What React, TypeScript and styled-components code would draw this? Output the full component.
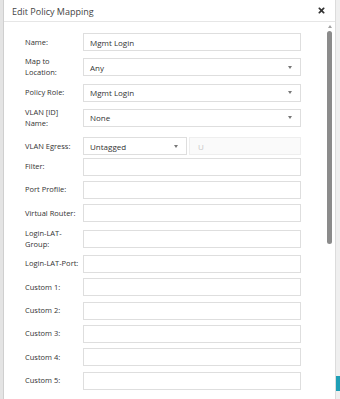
import React from "react"
import styled, { createGlobalStyle } from "styled-components"
import { FaTimes } from "react-icons/fa"

const GlobalStyle = createGlobalStyle`
	html, body {
		margin: 0;
		padding: 0;
	}
	body {
		width: 340px;
		height: 399px;
		overflow: hidden;
		background: #ececec;
		font-family: "Open Sans", "Liberation Sans", sans-serif;
		color: #333;
	}
`

type Field = {
	label: string
	kind: "text" | "select"
	value?: string
	twoLines?: boolean
}

const fields: Field[] = [
	{ label: "Name:", kind: "text", value: "Mgmt Login" },
	{ label: "Map to Location:", kind: "select", value: "Any", twoLines: true },
	{ label: "Policy Role:", kind: "select", value: "Mgmt Login" },
	{ label: "VLAN [ID] Name:", kind: "select", value: "None", twoLines: true }
]

const moreFields: Field[] = [
	{ label: "Filter:", kind: "text" },
	{ label: "Port Profile:", kind: "text" },
	{ label: "Virtual Router:", kind: "text" },
	{ label: "Login-LAT-Group:", kind: "text", twoLines: true },
	{ label: "Login-LAT-Port:", kind: "text" },
	{ label: "Custom 1:", kind: "text" },
	{ label: "Custom 2:", kind: "text" },
	{ label: "Custom 3:", kind: "text" },
	{ label: "Custom 4:", kind: "text" },
	{ label: "Custom 5:", kind: "text" }
]

const FieldRow = ({ field }: { field: Field }) => (
	<Row>
		<Label $narrow={field.twoLines}>{field.label}</Label>
		{field.kind === "select" ? (
			<SelectBox>
				<span>{field.value}</span>
				<Caret />
			</SelectBox>
		) : (
			<TextBox>{field.value}</TextBox>
		)}
	</Row>
)

const App = () => {
	return (
		<Page>
			<GlobalStyle />
			<LeftEdge />
			<Modal>
				<Header>
					<Title>Edit Policy Mapping</Title>
					<CloseButton>
						<FaTimes size={9} />
					</CloseButton>
				</Header>
				<Body>
					<Form>
						{fields.map(f => (
							<FieldRow key={f.label} field={f} />
						))}
						<Row $nudge>
							<Label>VLAN Egress:</Label>
							<SelectBox $width={104}>
								<span>Untagged</span>
								<Caret />
							</SelectBox>
							<DisabledBox>U</DisabledBox>
						</Row>
						{moreFields.map(f => (
							<FieldRow key={f.label} field={f} />
						))}
					</Form>
					<ScrollBar>
						<UpArrow />
						<Thumb />
					</ScrollBar>
				</Body>
			</Modal>
			<RightEdge>
				<TealTab />
			</RightEdge>
		</Page>
	)
}

const Page = styled.div`
	display: flex;
	width: 340px;
	height: 399px;
`

const LeftEdge = styled.div`
	width: 3px;
	background: #e4e4e4;
`

const Modal = styled.div`
	width: 333px;
	box-sizing: border-box;
	background: #fff;
	border-left: 1px solid #cfcfcf;
	border-right: 1px solid #dcdcdc;
	display: flex;
	flex-direction: column;
	overflow: hidden;
`

const Header = styled.div`
	height: 21px;
	flex-shrink: 0;
	display: flex;
	align-items: center;
	justify-content: space-between;
	padding: 0 9px 0 8px;
	border-bottom: 1px solid #e6e6e6;
`

const Title = styled.div`
	font-size: 9px;
	color: #444;
	padding-top: 1px;
`

const CloseButton = styled.div`
	display: flex;
	align-items: center;
	color: #333;
`

const Body = styled.div`
	flex: 1;
	display: flex;
`

const Form = styled.div`
	flex: 1;
	display: flex;
	flex-direction: column;
	gap: 5.33px;
	padding: 11px 24px 0 21px;
`

const Row = styled.div<{ $nudge?: boolean }>`
	display: flex;
	align-items: center;
	min-height: 18px;
	padding-top: ${p => (p.$nudge ? "3px" : "0")};
	margin-bottom: ${p => (p.$nudge ? "-3px" : "0")};
`

const Label = styled.div<{ $narrow?: boolean }>`
	width: 58px;
	flex-shrink: 0;
	font-size: 7.5px;
	line-height: 11px;
	color: #333;
	padding-right: ${p => (p.$narrow ? "18px" : "0")};
	box-sizing: border-box;
`

const boxBase = `
	box-sizing: border-box;
	height: 18px;
	border: 1px solid #dedede;
	font-size: 8px;
	color: #333;
	display: flex;
	align-items: center;
	padding: 0 6px;
`

const TextBox = styled.div`
	${boxBase}
	flex: 1;
`

const SelectBox = styled.div<{ $width?: number }>`
	${boxBase}
	justify-content: space-between;
	padding-right: 8px;
	${p => (p.$width ? `width: ${p.$width}px;` : "flex: 1;")}
`

const Caret = styled.span`
	width: 0;
	height: 0;
	border-top: 3px solid #777;
	border-left: 2.5px solid transparent;
	border-right: 2.5px solid transparent;
`

const DisabledBox = styled.div`
	${boxBase}
	flex: 1;
	margin-left: 2px;
	background: #fafafa;
	border-color: #eeeeee;
	color: #c8c8c8;
	padding-left: 8px;
`

const ScrollBar = styled.div`
	width: 9px;
	flex-shrink: 0;
	display: flex;
	flex-direction: column;
	align-items: center;
	padding-top: 3px;
	margin-right: 1px;
`

const UpArrow = styled.span`
	width: 0;
	height: 0;
	border-bottom: 3px solid #a0a0a0;
	border-left: 2.5px solid transparent;
	border-right: 2.5px solid transparent;
`

const Thumb = styled.div`
	width: 5px;
	height: 213px;
	margin-top: 3px;
	border-radius: 3px;
	background: #8b8b8b;
`

const RightEdge = styled.div`
	flex: 1;
	background: #efefef;
	display: flex;
	flex-direction: column;
	justify-content: flex-end;
	padding-bottom: 8px;
`

const TealTab = styled.div`
	height: 15px;
	background: #1f9fb6;
`

export default App
